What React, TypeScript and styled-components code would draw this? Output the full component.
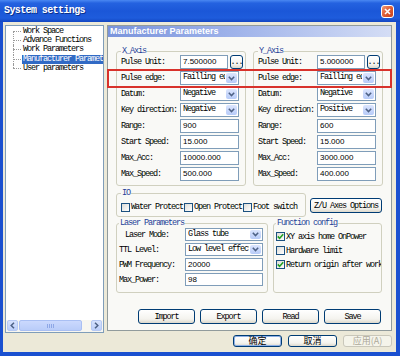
import React from "react";
import styled, { createGlobalStyle, css } from "styled-components";

const mono = `"Liberation Mono", "DejaVu Sans Mono", monospace`;
const cjk = `"Noto Sans CJK SC", "Liberation Sans", sans-serif`;

const monoText = css`
  font-family: ${mono};
  font-size: 8.5px;
  line-height: 10px;
  letter-spacing: -1.1px;
`;

const GlobalStyle = createGlobalStyle`
  html, body { margin: 0; padding: 0; background: #ffffff; }
  body { font-family: ${mono}; }
  * { box-sizing: border-box; }
`;

const Window = styled.div`
  width: 400px;
  height: 356px;
  display: flex;
  flex-direction: column;
  background: #1a50d0;
  overflow: hidden;
`;

const TitleBar = styled.div`
  height: 22px;
  flex: none;
  display: flex;
  align-items: center;
  justify-content: space-between;
  padding: 0 6px 0 4px;
  background: linear-gradient(to bottom, #4a88f2 0%, #2462e0 14%, #1b57d8 50%, #1e5cdc 82%, #1446c2 100%);
`;

const Title = styled.div`
  font: bold 10px/12px ${mono};
  letter-spacing: -0.6px;
  color: #ffffff;
  text-shadow: 1px 1px 0 #0b2f8a;
`;

const CloseButton = styled.div`
  width: 13px;
  height: 13px;
  border: 1px solid #ffffff;
  border-radius: 3px;
  background: linear-gradient(135deg, #f09a76 0%, #e0613a 45%, #c6401c 100%);
  display: flex;
  align-items: center;
  justify-content: center;
`;

const Frame = styled.div`
  flex: 1;
  display: flex;
  padding: 0 4px 4px 3px;
`;

const Body = styled.div`
  flex: 1;
  display: flex;
  align-items: flex-start;
  gap: 3px;
  padding: 3px 4px 0 2px;
  background: #ece9d8;
`;

const TreePanel = styled.div`
  width: 99px;
  height: 308px;
  flex: none;
  display: flex;
  flex-direction: column;
  border: 1px solid #7f9db9;
  background: #ffffff;
`;

const TreeList = styled.ul`
  flex: 1;
  margin: 0;
  padding: 1px 0 0 0;
  list-style: none;
  overflow: hidden;
`;

const TreeItem = styled.li<{ $pos: "first" | "mid" | "last" }>`
  position: relative;
  height: 9.2px;
  padding-left: 16px;
  white-space: nowrap;
  ${monoText};
  line-height: 9px;
  color: #000000;
  &::before {
    content: "";
    position: absolute;
    left: 7px;
    top: 4px;
    width: 8px;
    border-top: 1px dotted #9a9a9a;
  }
  &::after {
    content: "";
    position: absolute;
    left: 7px;
    border-left: 1px dotted #9a9a9a;
    top: ${(p) => (p.$pos === "first" ? "4px" : "0")};
    height: ${(p) => (p.$pos === "mid" ? "100%" : p.$pos === "first" ? "60%" : "4px")};
  }
`;

const ItemText = styled.span<{ $selected?: boolean }>`
  display: inline-block;
  padding: 0 1px;
  height: 9px;
  background: ${(p) => (p.$selected ? "#316ac5" : "transparent")};
  color: ${(p) => (p.$selected ? "#ffffff" : "#000000")};
`;

const HScroll = styled.div`
  height: 12px;
  flex: none;
  display: flex;
  align-items: center;
  padding: 0 1px 1px 1px;
  background: #f7f6f0;
`;

const ScrollBtn = styled.div`
  width: 11px;
  height: 11px;
  flex: none;
  border: 1px solid #b6c9f4;
  border-radius: 2px;
  background: linear-gradient(to bottom, #d6e2fd, #bccffa);
  display: flex;
  align-items: center;
  justify-content: center;
`;

const Thumb = styled.div`
  width: 63px;
  height: 11px;
  flex: none;
  margin-left: 1px;
  border: 1px solid #a9bff3;
  border-radius: 2px;
  background: linear-gradient(to bottom, #cbd9fd, #b9ccf9);
  display: flex;
  align-items: center;
  justify-content: center;
  gap: 1px;
`;

const Grip = styled.span`
  width: 1px;
  height: 4px;
  background: #8ea7e6;
`;

const Track = styled.div`
  flex: 1;
`;

const RightCol = styled.div`
  width: 285px;
  flex: none;
  display: flex;
  flex-direction: column;
  gap: 4px;
`;

const Page = styled.div`
  position: relative;
  height: 306px;
  display: flex;
  flex-direction: column;
  border: 1px solid #919b9c;
  background: #f9f9f6;
`;

const PageHeader = styled.div`
  height: 11px;
  flex: none;
  padding-left: 2px;
  font: bold 9px/11px "Liberation Sans", Arial, sans-serif;
  color: #ffffff;
  background: linear-gradient(to right, #7a94dc 0%, #9fb3ea 45%, #d4ddf5 100%);
`;

const Content = styled.div`
  display: flex;
  flex-direction: column;
  padding: 10px 8px 0 8px;
`;

const Row = styled.div<{ $mt?: number; $align?: string; $gap?: number }>`
  display: flex;
  align-items: ${(p) => p.$align ?? "stretch"};
  gap: ${(p) => p.$gap ?? 0}px;
  margin-top: ${(p) => p.$mt ?? 0}px;
`;

const Group = styled.fieldset<{ $w: number; $pad: string; $ml?: number }>`
  width: ${(p) => p.$w}px;
  flex: none;
  margin: 0 0 0 ${(p) => p.$ml ?? 0}px;
  padding: ${(p) => p.$pad};
  min-width: 0;
  border: 1px solid #d0d0bf;
  border-radius: 3px;
  overflow: hidden;
`;

const Legend = styled.legend`
  padding: 0 1px;
  margin: 0;
  ${monoText};
  line-height: 8px;
  color: #1f3f98;
`;

const Rows = styled.div<{ $gap: number; $pt?: number }>`
  display: flex;
  flex-direction: column;
  gap: ${(p) => p.$gap}px;
  padding-top: ${(p) => p.$pt ?? 0}px;
`;

const Field = styled.div<{ $h: number }>`
  display: flex;
  align-items: center;
  height: ${(p) => p.$h}px;
`;

const Label = styled.div<{ $w: number; $indent?: number }>`
  width: ${(p) => p.$w}px;
  flex: none;
  padding-left: ${(p) => p.$indent ?? 0}px;
  white-space: nowrap;
  ${monoText};
  color: #000000;
`;

const TextBox = styled.div<{ $w: number }>`
  width: ${(p) => p.$w}px;
  height: 100%;
  flex: none;
  padding-left: 2px;
  border: 1px solid #7f9db9;
  background: #ffffff;
  font: 8px/12px "Liberation Sans", Arial, sans-serif;
  color: #000000;
  white-space: nowrap;
  overflow: hidden;
`;

const Combo = styled.div<{ $w: number }>`
  width: ${(p) => p.$w}px;
  height: 100%;
  flex: none;
  display: flex;
  align-items: stretch;
  border: 1px solid #7f9db9;
  background: #ffffff;
`;

const ComboText = styled.div`
  flex: 1;
  min-width: 0;
  padding-left: 2px;
  ${monoText};
  line-height: 11px;
  color: #000000;
  white-space: nowrap;
  overflow: hidden;
`;

const ComboArrow = styled.div`
  width: 11px;
  flex: none;
  margin: 1px;
  border-radius: 2px;
  background: linear-gradient(to bottom, #dbe5fd, #b7cbf8);
  display: flex;
  align-items: center;
  justify-content: center;
`;

const XpButton = styled.div<{ $w: number; $h: number; $ml?: number; $mb?: number; $default?: boolean; $disabled?: boolean }>`
  width: ${(p) => p.$w}px;
  height: ${(p) => p.$h}px;
  flex: none;
  margin-left: ${(p) => p.$ml ?? 0}px;
  margin-bottom: ${(p) => p.$mb ?? 0}px;
  display: flex;
  align-items: center;
  justify-content: center;
  border: 1px solid ${(p) => (p.$disabled ? "#c9c7ba" : "#003c74")};
  border-radius: 3px;
  background: ${(p) =>
    p.$disabled ? "#f5f4ea" : "linear-gradient(to bottom, #ffffff 0%, #f4f3ee 70%, #dcd8cc 100%)"};
  box-shadow: ${(p) => (p.$default ? "inset 0 0 0 1px #8eb0e6" : "none")};
  ${monoText};
  color: ${(p) => (p.$disabled ? "#aca899" : "#000000")};
  white-space: nowrap;
`;

const CjkLabel = styled.span<{ $disabled?: boolean }>`
  font: 9px/10px ${cjk};
  letter-spacing: 0;
  color: ${(p) => (p.$disabled ? "#aca899" : "#000000")};
`;

const CheckRow = styled.div`
  display: flex;
  align-items: center;
  height: 12px;
`;

const Check = styled.div<{ $h?: number }>`
  display: flex;
  align-items: center;
  height: ${(p) => p.$h ?? 12}px;
  margin-right: 1px;
  white-space: nowrap;
  ${monoText};
  color: #000000;
`;

const Box = styled.span`
  width: 9px;
  height: 9px;
  flex: none;
  margin-right: 1px;
  border: 1px solid #1c5180;
  background: linear-gradient(135deg, #dcdcd7, #ffffff);
  display: flex;
  align-items: center;
  justify-content: center;
`;

const ActionRow = styled.div`
  display: flex;
  gap: 5px;
  margin-top: 16px;
  padding-left: 22px;
`;

const DialogButtons = styled.div`
  display: flex;
  justify-content: flex-end;
  gap: 6px;
`;

const Highlight = styled.div`
  position: absolute;
  left: -1px;
  top: 43px;
  width: 285px;
  height: 19px;
  border: 2px solid #d8322b;
  pointer-events: none;
`;

const ChevronDown = () => (
  <svg width="7" height="5" viewBox="0 0 7 5">
    <path d="M0.8 0.8 L3.5 3.6 L6.2 0.8" fill="none" stroke="#4d6185" strokeWidth="1.5" />
  </svg>
);

const ChevronSide = ({ dir }: { dir: "left" | "right" }) => (
  <svg width="5" height="7" viewBox="0 0 5 7">
    <path
      d={dir === "left" ? "M4 0.8 L1.2 3.5 L4 6.2" : "M1 0.8 L3.8 3.5 L1 6.2"}
      fill="none"
      stroke="#4d6185"
      strokeWidth="1.5"
    />
  </svg>
);

const CheckMark = () => (
  <svg width="7" height="7" viewBox="0 0 7 7">
    <path d="M0.8 3.4 L2.6 5.4 L6.2 1.2" fill="none" stroke="#21a121" strokeWidth="1.6" />
  </svg>
);

type AxisRow = { label: string; kind: "unit" | "combo" | "text"; value: string };

const axisLabels = ["Pulse Unit:", "Pulse edge:", "Datum:", "Key direction:", "Range:", "Start Speed:", "Max_Acc:", "Max_Speed:"];
const axisKinds: AxisRow["kind"][] = ["unit", "combo", "combo", "combo", "text", "text", "text", "text"];

const makeAxis = (v: string[]): AxisRow[] =>
  axisLabels.map((label, i) => ({ label, kind: axisKinds[i], value: v[i] }));

const xAxis = makeAxis(["7.500000", "Failling edge", "Negative", "Negative", "900", "15.000", "10000.000", "500.000"]);
const yAxis = makeAxis(["5.000000", "Failling edge", "Negative", "Positive", "600", "15.000", "3000.000", "400.000"]);

const AxisGroup = ({ title, rows }: { title: string; rows: AxisRow[] }) => (
  <Group $w={130} $pad="0 6px 4px 4px">
    <Legend>{title}</Legend>
    <Rows $gap={2}>
      {rows.map((r) => (
        <Field key={r.label} $h={14}>
          <Label $w={59}>{r.label}</Label>
          {r.kind === "unit" && (
            <>
              <TextBox $w={48}>{r.value}</TextBox>
              <XpButton $w={13} $h={14} $ml={2}>...</XpButton>
            </>
          )}
          {r.kind === "combo" && (
            <Combo $w={59}>
              <ComboText>{r.value}</ComboText>
              <ComboArrow>
                <ChevronDown />
              </ComboArrow>
            </Combo>
          )}
          {r.kind === "text" && <TextBox $w={59}>{r.value}</TextBox>}
        </Field>
      ))}
    </Rows>
  </Group>
);

const treeItems = ["Work Space", "Advance Functions", "Work Parameters", "Manufacturer Parameters", "User parameters"];

export default function App() {
  return (
    <>
      <GlobalStyle />
      <Window>
        <TitleBar>
          <Title>System settings</Title>
          <CloseButton>
            <svg width="7" height="7" viewBox="0 0 7 7">
              <path d="M1 1 L6 6 M6 1 L1 6" stroke="#ffffff" strokeWidth="1.6" />
            </svg>
          </CloseButton>
        </TitleBar>
        <Frame>
          <Body>
            <TreePanel>
              <TreeList>
                {treeItems.map((t, i) => (
                  <TreeItem key={t} $pos={i === 0 ? "first" : i === treeItems.length - 1 ? "last" : "mid"}>
                    <ItemText $selected={i === 3}>{t}</ItemText>
                  </TreeItem>
                ))}
              </TreeList>
              <HScroll>
                <ScrollBtn>
                  <ChevronSide dir="left" />
                </ScrollBtn>
                <Thumb>
                  <Grip />
                  <Grip />
                  <Grip />
                  <Grip />
                </Thumb>
                <Track />
                <ScrollBtn>
                  <ChevronSide dir="right" />
                </ScrollBtn>
              </HScroll>
            </TreePanel>
            <RightCol>
              <Page>
                <PageHeader>Manufacturer Parameters</PageHeader>
                <Content>
                  <Row $gap={7}>
                    <AxisGroup title="X_Axis" rows={xAxis} />
                    <AxisGroup title="Y_Axis" rows={yAxis} />
                  </Row>
                  <Row $mt={3} $align="flex-end">
                    <Group $w={190} $pad="0 2px 3px 4px">
                      <Legend>IO</Legend>
                      <Rows $gap={0} $pt={4}>
                        <CheckRow>
                          <Check>
                            <Box />
                            Water Protect
                          </Check>
                          <Check>
                            <Box />
                            Open Protect
                          </Check>
                          <Check>
                            <Box />
                            Foot switch
                          </Check>
                        </CheckRow>
                      </Rows>
                    </Group>
                    <XpButton $w={72} $h={15} $ml={4} $mb={4}>
                      Z/U Axes Options
                    </XpButton>
                  </Row>
                  <Row $mt={2}>
                    <Group $w={152} $pad="0 4px 6px 2px">
                      <Legend>Laser Parameters</Legend>
                      <Rows $gap={2} $pt={1}>
                        <Field $h={13}>
                          <Label $w={66} $indent={6}>Laser Mode:</Label>
                          <Combo $w={78}>
                            <ComboText>Glass tube</ComboText>
                            <ComboArrow>
                              <ChevronDown />
                            </ComboArrow>
                          </Combo>
                        </Field>
                        <Field $h={13}>
                          <Label $w={66}>TTL Level:</Label>
                          <Combo $w={78}>
                            <ComboText>Low level effect</ComboText>
                            <ComboArrow>
                              <ChevronDown />
                            </ComboArrow>
                          </Combo>
                        </Field>
                        <Field $h={13}>
                          <Label $w={66}>PWM Frequency:</Label>
                          <TextBox $w={78}>20000</TextBox>
                        </Field>
                        <Field $h={13}>
                          <Label $w={66}>Max_Power:</Label>
                          <TextBox $w={78}>98</TextBox>
                        </Field>
                      </Rows>
                    </Group>
                    <Group $w={109} $ml={5} $pad="0 0 0 2px">
                      <Legend>Function config</Legend>
                      <Rows $gap={1} $pt={3}>
                        <Check $h={13}>
                          <Box>
                            <CheckMark />
                          </Box>
                          XY axis home OnPower
                        </Check>
                        <Check $h={13}>
                          <Box />
                          Hardware limit
                        </Check>
                        <Check $h={13}>
                          <Box>
                            <CheckMark />
                          </Box>
                          Return origin after work
                        </Check>
                      </Rows>
                    </Group>
                  </Row>
                  <ActionRow>
                    <XpButton $w={57} $h={15}>Import</XpButton>
                    <XpButton $w={57} $h={15}>Export</XpButton>
                    <XpButton $w={57} $h={15}>Read</XpButton>
                    <XpButton $w={57} $h={15}>Save</XpButton>
                  </ActionRow>
                </Content>
                <Highlight />
              </Page>
              <DialogButtons>
                <XpButton $w={49} $h={12} $default>
                  <CjkLabel>确定</CjkLabel>
                </XpButton>
                <XpButton $w={49} $h={12}>
                  <CjkLabel>取消</CjkLabel>
                </XpButton>
                <XpButton $w={49} $h={12} $disabled>
                  <CjkLabel $disabled>应用(A)</CjkLabel>
                </XpButton>
              </DialogButtons>
            </RightCol>
          </Body>
        </Frame>
      </Window>
    </>
  );
}
